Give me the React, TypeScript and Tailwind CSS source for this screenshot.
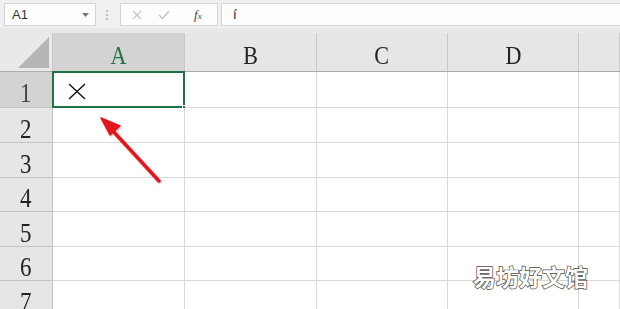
import React from 'react'

const cols = [
  { label: 'A', w: 'w-[132px]' },
  { label: 'B', w: 'w-[132px]' },
  { label: 'C', w: 'w-[131px]' },
  { label: 'D', w: 'w-[131px]' },
  { label: '', w: 'flex-1' },
]

const rows = [
  { n: '1', h: 'h-[36px]' },
  { n: '2', h: 'h-[35px]' },
  { n: '3', h: 'h-[35px]' },
  { n: '4', h: 'h-[34px]' },
  { n: '5', h: 'h-[35px]' },
  { n: '6', h: 'h-[34px]' },
  { n: '7', h: 'h-[35px]' },
]

const serif = "font-['Liberation_Serif','Noto_Serif',serif]"

function FormulaBar() {
  return (
    <div className="flex h-[28px] items-center bg-[#f0f0f0] pt-[1px]">
      <div className="ml-[4px] flex h-[23px] w-[92px] items-center justify-between border border-[#d6d6d6] bg-[#fdfdfd] pl-[7px] pr-[6px] font-['Liberation_Sans',sans-serif] text-[13px] text-[#333]">
        <span>A1</span>
        <svg width="7" height="4" viewBox="0 0 7 4">
          <path d="M0 0 L7 0 L3.5 4 Z" fill="#777" />
        </svg>
      </div>
      <div className="ml-[10px] flex h-[10px] w-[3px] flex-col justify-between">
        <span className="h-[2px] w-[2px] bg-[#bdbdbd]" />
        <span className="h-[2px] w-[2px] bg-[#bdbdbd]" />
        <span className="h-[2px] w-[2px] bg-[#bdbdbd]" />
      </div>
      <div className="ml-[11px] flex h-[23px] w-[98px] items-center border border-[#d6d6d6] bg-[#fdfdfd]">
        <svg className="ml-[11px]" width="10" height="10" viewBox="0 0 10 10">
          <path d="M1 1 L9 9 M9 1 L1 9" stroke="#c4c4c4" strokeWidth="1.2" />
        </svg>
        <svg className="ml-[16px]" width="12" height="10" viewBox="0 0 12 10">
          <path d="M1 5 L4.5 8.5 L11 1" stroke="#c4c4c4" strokeWidth="1.4" fill="none" />
        </svg>
        <span className="ml-[24px] font-['Liberation_Serif',serif] text-[13px] italic text-[#444]">
          f<span className="text-[9px]">x</span>
        </span>
      </div>
      <div className="ml-[3px] flex h-[23px] flex-1 items-center border border-r-0 border-[#d6d6d6] bg-[#fdfdfd] pl-[11px] font-['DejaVu_Sans',sans-serif] text-[13px] text-[#222]">
        í
      </div>
    </div>
  )
}

export default function App() {
  return (
    <div className="relative h-[309px] w-[620px] overflow-hidden bg-[#e9e9e9]">
      <FormulaBar />
      <div className="h-[5px] bg-[#e9e9e9]" />

      {/* column header */}
      <div className="flex h-[39px] border-b border-[#ababab]">
        <div className="relative w-[53px] border-r border-[#c8c8c8] bg-[#e9e9e9]">
          <svg className="absolute bottom-[3px] right-[3px]" width="31" height="31" viewBox="0 0 31 31">
            <path d="M31 0 L31 31 L0 31 Z" fill="#b5b5b5" />
          </svg>
        </div>
        {cols.map((c) => (
          <div
            key={c.label || 'e'}
            className={`${c.w} flex items-center justify-center border-r border-[#c8c8c8] ${
              c.label === 'A' ? 'bg-[#d3d3d3] text-[#217346]' : 'bg-[#e6e6e6] text-[#222]'
            } ${serif} text-[26px] leading-none`}
          >
            <span className="inline-block scale-x-[0.85] pt-[8px]">{c.label}</span>
          </div>
        ))}
      </div>

      {/* rows */}
      {rows.map((r) => (
        <div key={r.n} className={`flex ${r.h}`}>
          <div
            className={`flex w-[53px] items-center justify-center border-b border-r border-[#c3c3c3] ${
              r.n === '1' ? 'bg-[#d3d3d3] text-[#3a4a3a]' : 'bg-[#e6e6e6] text-[#222]'
            } ${serif} text-[27px] leading-none`}
          >
            <span className="inline-block scale-x-[0.85] pt-[8px]">{r.n}</span>
          </div>
          {cols.map((c) => (
            <div
              key={c.label || 'e'}
              className={`${c.w} relative border-b border-r border-[#d9d9d9] bg-white`}
            >
              {r.n === '1' && c.label === 'A' && (
                <>
                  <div className="absolute -left-[1px] -top-[1px] -right-[1px] -bottom-[1px] border-2 border-[#217346]" />
                  <div className="absolute -bottom-[3px] -right-[3px] h-[5px] w-[5px] border border-white bg-[#217346]" />
                  <svg className="absolute left-[15px] top-[11px]" width="18" height="17" viewBox="0 0 18 17">
                    <path d="M1 1 L17 16 M17 1 L1 16" stroke="#111" strokeWidth="1.4" />
                  </svg>
                </>
              )}
            </div>
          ))}
        </div>
      ))}

      {/* red arrow annotation */}
      <svg className="absolute left-0 top-0" width="620" height="309" viewBox="0 0 620 309">
        <defs>
          <filter id="sh" x="-20%" y="-20%" width="140%" height="140%">
            <feDropShadow dx="1" dy="1" stdDeviation="1" floodColor="#000" floodOpacity="0.25" />
          </filter>
        </defs>
        <g filter="url(#sh)">
          <path d="M159 181 L112 130" stroke="#e3191b" strokeWidth="3.5" strokeLinecap="round" />
          <path d="M101 118 L120 126 L110 135 Z" fill="#e3191b" stroke="#e3191b" strokeWidth="1.5" strokeLinejoin="round" />
        </g>
      </svg>

      {/* watermark */}
      <div className="absolute left-[473px] top-[259px] font-['Noto_Sans_CJK_SC',sans-serif] text-[23px] font-bold text-white [-webkit-text-stroke:1.4px_#4a4a4a] [paint-order:stroke_fill]">
        易坊好文馆
      </div>
    </div>
  )
}
